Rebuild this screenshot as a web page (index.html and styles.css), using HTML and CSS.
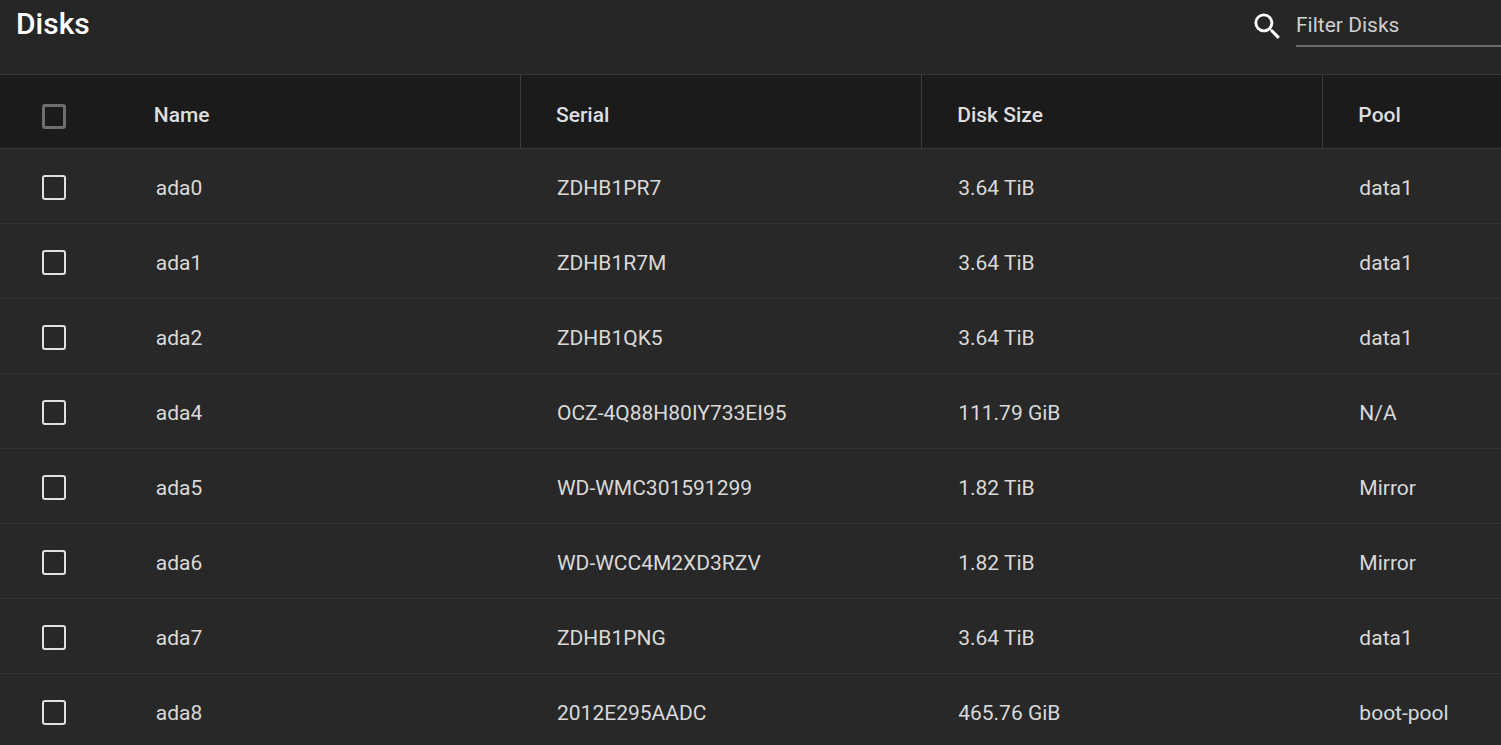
FILE: index.html
```html
<!DOCTYPE html>
<html lang="en">
<head>
<meta charset="utf-8">
<title>Disks</title>
<link rel="stylesheet" href="styles.css">
</head>
<body>
<header class="toolbar">
  <h1 class="title">Disks</h1>
  <div class="filter">
    <svg class="search-icon" viewBox="0 0 24 24" width="35" height="35"><path fill="currentColor" d="M15.5 14h-.79l-.28-.27A6.47 6.47 0 0 0 16 9.5 6.5 6.5 0 1 0 9.5 16c1.61 0 3.09-.59 4.23-1.57l.27.28v.79l5 4.99L20.49 19l-4.99-5zm-6 0C7.01 14 5 11.99 5 9.5S7.01 5 9.5 5 14 7.01 14 9.5 11.99 14 9.5 14z"/></svg>
    <div class="filter-field">Filter Disks</div>
  </div>
</header>
<div class="table">
  <div class="row head">
    <div class="cell check"><span class="box box-head"></span></div>
    <div class="cell">Name</div>
    <div class="cell divided">Serial</div>
    <div class="cell divided">Disk Size</div>
    <div class="cell divided">Pool</div>
  </div>
  <div class="row">
    <div class="cell check"><span class="box"></span></div>
    <div class="cell">ada0</div><div class="cell">ZDHB1PR7</div><div class="cell">3.64 TiB</div><div class="cell">data1</div>
  </div>
  <div class="row">
    <div class="cell check"><span class="box"></span></div>
    <div class="cell">ada1</div><div class="cell">ZDHB1R7M</div><div class="cell">3.64 TiB</div><div class="cell">data1</div>
  </div>
  <div class="row">
    <div class="cell check"><span class="box"></span></div>
    <div class="cell">ada2</div><div class="cell">ZDHB1QK5</div><div class="cell">3.64 TiB</div><div class="cell">data1</div>
  </div>
  <div class="row">
    <div class="cell check"><span class="box"></span></div>
    <div class="cell">ada4</div><div class="cell">OCZ-4Q88H80IY733EI95</div><div class="cell">111.79 GiB</div><div class="cell">N/A</div>
  </div>
  <div class="row">
    <div class="cell check"><span class="box"></span></div>
    <div class="cell">ada5</div><div class="cell">WD-WMC301591299</div><div class="cell">1.82 TiB</div><div class="cell">Mirror</div>
  </div>
  <div class="row">
    <div class="cell check"><span class="box"></span></div>
    <div class="cell">ada6</div><div class="cell">WD-WCC4M2XD3RZV</div><div class="cell">1.82 TiB</div><div class="cell">Mirror</div>
  </div>
  <div class="row">
    <div class="cell check"><span class="box"></span></div>
    <div class="cell">ada7</div><div class="cell">ZDHB1PNG</div><div class="cell">3.64 TiB</div><div class="cell">data1</div>
  </div>
  <div class="row">
    <div class="cell check"><span class="box"></span></div>
    <div class="cell">ada8</div><div class="cell">2012E295AADC</div><div class="cell">465.76 GiB</div><div class="cell">boot-pool</div>
  </div>
</div>
</body>
</html>
```
FILE: styles.css
```css
html, body {
  margin: 0;
  height: 100%;
  overflow: hidden;
  background: #282828;
  font-family: Roboto, "Liberation Sans", sans-serif;
}
.toolbar {
  height: 75px;
  box-sizing: border-box;
  display: flex;
  justify-content: space-between;
  align-items: flex-start;
  background: #262626;
  border-bottom: 1px solid #383838;
}
.title {
  margin: 6px 0 0 16px;
  font-size: 30px;
  line-height: 36px;
  font-weight: 500;
  color: #fff;
}
.filter {
  display: flex;
  align-items: flex-start;
  width: 248px;
}
.search-icon {
  color: #fff;
  margin: 9px 11px 0 -3px;
  flex: none;
}
.filter-field {
  flex: 1;
  height: 47px;
  box-sizing: border-box;
  padding-top: 12px;
  font-size: 21px;
  line-height: 26px;
  color: #cfcfcf;
  border-bottom: 2px solid #6b6b6b;
}
.table {
  display: flex;
  flex-direction: column;
}
.row {
  display: grid;
  grid-template-columns: 118.8px 401.2px 401.2px 401.2px 1fr;
  height: 75px;
  box-sizing: border-box;
  border-bottom: 1px solid #333;
  color: #d9d9d9;
  font-size: 21px;
}
.row:last-child {
  border-bottom: 0;
}
.row .cell:not(.check) {
  padding-left: 37px;
  padding-top: 3px;
}
.cell {
  display: flex;
  align-items: center;
  box-sizing: border-box;
  white-space: nowrap;
}
.check {
  padding-left: 42px;
  padding-top: 2px;
}
.box {
  width: 24px;
  height: 25px;
  box-sizing: border-box;
  border: 2px solid #e0e0e0;
  border-radius: 3px;
}
.head {
  height: 74px;
  background: #1b1b1b;
  border-bottom-color: #383838;
  color: #dedede;
  font-weight: 500;
}
.row.head .cell:not(.check) {
  padding-left: 35px;
  padding-top: 6px;
}
.row.head .divided {
  padding-left: 34.2px;
}
.box-head {
  border: 3px solid #6e6e6e;
  margin-top: 8px;
}
.divided {
  border-left: 1px solid #3c3c3c;
}
```
